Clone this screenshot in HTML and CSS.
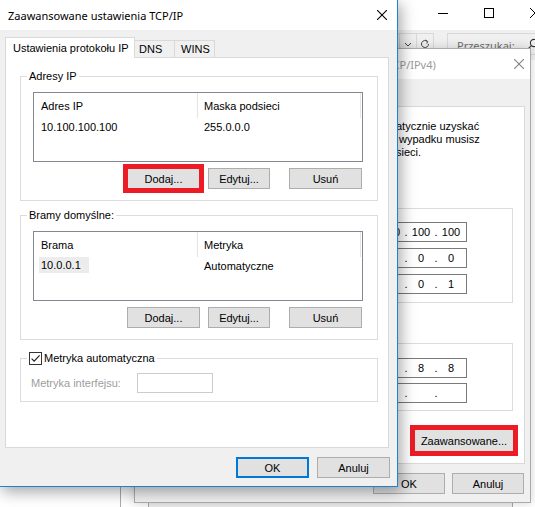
FILE: index.html
```html
<!DOCTYPE html>
<html lang="pl">
<head>
<meta charset="utf-8">
<title>Zaawansowane ustawienia TCP/IP</title>
<link rel="stylesheet" href="styles.css">
</head>
<body>
<div class="desktop">

  <div class="win explorer">
    <div class="ex-title">
      <span class="cap"><svg class="cap-ico" viewBox="0 0 10 10"><line x1="0" y1="5.5" x2="10" y2="5.5"/></svg></span>
      <span class="cap"><svg class="cap-ico" viewBox="0 0 10 10"><rect x="0.5" y="0.5" width="9" height="9"/></svg></span>
      <span class="cap"><svg class="cap-ico" viewBox="0 0 10 10"><line x1="0" y1="0" x2="10" y2="10"/><line x1="10" y1="0" x2="0" y2="10"/></svg></span>
    </div>
    <div class="ex-bar">
      <div class="ex-address">
        <span class="ex-seg"><svg class="ex-ico" viewBox="0 0 10 10"><polyline points="2,4 5,7 8,4"/></svg></span>
        <span class="ex-seg"><svg class="ex-ico" viewBox="0 0 10 10"><path d="M8.5 5a3.5 3.5 0 1 1 -1.2 -2.6"/><polyline points="5.5,1 7.6,2.4 6.8,4.6"/></svg></span>
      </div>
      <div class="ex-search">
        <span class="ex-search-text">Przeszukaj: Połączenia sieciowe</span>
        <svg class="ex-mag" viewBox="0 0 12 12"><circle cx="7" cy="5" r="3.6"/><line x1="4.4" y1="7.6" x2="0.8" y2="11.2"/></svg>
      </div>
    </div>
    <div class="ex-content"></div>
  </div>

  <div class="win ethprops"></div>

  <div class="win props">
    <div class="props-title">
      <span class="props-title-text">Właściwości: Protokół internetowy w wersji 4 (TCP/IPv4)</span>
      <svg class="close-ico close-ico-dim" viewBox="0 0 10 10"><line x1="0" y1="0" x2="10" y2="10"/><line x1="10" y1="0" x2="0" y2="10"/></svg>
    </div>
    <div class="props-body">
      <div class="props-tabs"><div class="props-tab"></div></div>
      <div class="panel props-panel">
        <p class="props-intro">atycznie uzyskać<br>&nbsp;wypadku musisz<br>sieci.</p>
        <div class="pgroup pgroup-ip">
          <div class="ipbox"><span class="oct">10</span><span class="dot">.</span><span class="oct">100</span><span class="dot">.</span><span class="oct">100</span><span class="dot">.</span><span class="oct">100</span></div>
          <div class="ipbox"><span class="oct">255</span><span class="dot">.</span><span class="oct">0</span><span class="dot">.</span><span class="oct">0</span><span class="dot">.</span><span class="oct">0</span></div>
          <div class="ipbox"><span class="oct">10</span><span class="dot">.</span><span class="oct">0</span><span class="dot">.</span><span class="oct">0</span><span class="dot">.</span><span class="oct">1</span></div>
        </div>
        <div class="pgroup pgroup-dns">
          <div class="ipbox"><span class="oct">8</span><span class="dot">.</span><span class="oct">8</span><span class="dot">.</span><span class="oct">8</span><span class="dot">.</span><span class="oct">8</span></div>
          <div class="ipbox"><span class="oct"></span><span class="dot">.</span><span class="oct"></span><span class="dot">.</span><span class="oct"></span><span class="dot">.</span><span class="oct"></span></div>
        </div>
        <button class="btn btn-advanced marked">Zaawansowane...</button>
      </div>
      <div class="props-buttons">
        <button class="btn btn-props">OK</button>
        <button class="btn btn-props">Anuluj</button>
      </div>
    </div>
  </div>

  <div class="win adv">
    <div class="adv-title">
      <span>Zaawansowane ustawienia TCP/IP</span>
      <svg class="close-ico" viewBox="0 0 10 10"><line x1="0" y1="0" x2="10" y2="10"/><line x1="10" y1="0" x2="0" y2="10"/></svg>
    </div>
    <div class="adv-body">
      <div class="tabs">
        <div class="tab tab-active">Ustawienia protokołu IP</div>
        <div class="tab tab-dns">DNS</div>
        <div class="tab tab-wins">WINS</div>
      </div>
      <div class="panel adv-panel">

        <div class="group">
          <div class="group-title">Adresy IP</div>
          <div class="listview">
            <div class="lv-head"><div class="lv-c1">Adres IP</div><div class="lv-c2">Maska podsieci</div></div>
            <div class="lv-row"><div class="lv-c1">10.100.100.100</div><div class="lv-c2">255.0.0.0</div></div>
          </div>
          <div class="btn-row">
            <button class="btn btn-add marked">Dodaj...</button>
            <button class="btn btn-edit">Edytuj...</button>
            <button class="btn btn-del">Usuń</button>
          </div>
        </div>

        <div class="group group-gw">
          <div class="group-title">Bramy domyślne:</div>
          <div class="listview">
            <div class="lv-head"><div class="lv-c1">Brama</div><div class="lv-c2">Metryka</div></div>
            <div class="lv-row"><div class="lv-c1 lv-c1-sel"><span class="lv-sel">10.0.0.1</span></div><div class="lv-c2">Automatyczne</div></div>
          </div>
          <div class="btn-row">
            <button class="btn btn-add">Dodaj...</button>
            <button class="btn btn-edit">Edytuj...</button>
            <button class="btn btn-del">Usuń</button>
          </div>
        </div>

        <div class="group group-metric">
          <div class="group-title">
            <span class="check"><svg viewBox="0 0 11 11"><polyline points="1.6,5.6 4.2,8.2 9.6,2.4"/></svg></span>
            <span class="check-label">Metryka automatyczna</span>
          </div>
          <div class="metric-row">
            <span class="metric-label">Metryka interfejsu:</span>
            <span class="metric-input"></span>
          </div>
        </div>

      </div>
      <div class="dlg-buttons">
        <button class="btn btn-default">OK</button>
        <button class="btn">Anuluj</button>
      </div>
    </div>
  </div>

</div>
</body>
</html>
```

FILE: styles.css
```css
* { box-sizing: border-box; }

html, body {
  margin: 0;
  padding: 0;
}

body {
  width: 535px;
  height: 507px;
  overflow: hidden;
  background: #ffffff;
  font-family: "Tahoma", "Liberation Sans", sans-serif;
  font-size: 11px;
  color: #000000;
}

.desktop {
  position: relative;
  width: 535px;
  height: 507px;
  overflow: hidden;
  background: #ffffff;
}

.win {
  position: absolute;
}

/* ---------- background explorer window ---------- */
.explorer {
  left: 120px;
  top: -1px;
  width: 439px;
  height: 520px;
  border: 1px solid #aaaaaa;
  background: #ffffff;
  z-index: 1;
}

.ex-title {
  height: 30px;
  display: flex;
  justify-content: flex-end;
}

.cap {
  width: 46px;
  height: 25px;
  display: flex;
  align-items: center;
  justify-content: center;
}

.cap-ico {
  width: 10px;
  height: 10px;
  fill: none;
  stroke: #000000;
  stroke-width: 1;
}

.ex-bar {
  height: 30px;
  background: #f0f0f0;
  display: flex;
  padding-top: 3px;
}

.ex-address {
  margin-left: 179px;
  width: 134px;
  height: 22px;
  border: 1px solid #d9d9d9;
  display: flex;
  justify-content: flex-end;
}

.ex-seg {
  width: 17px;
  border-left: 1px solid #d9d9d9;
  display: flex;
  align-items: center;
  justify-content: center;
}

.ex-ico {
  width: 10px;
  height: 10px;
  fill: none;
  stroke: #444444;
  stroke-width: 1;
}

.ex-search {
  margin-left: 13px;
  width: 102px;
  height: 22px;
  border: 1px solid #d9d9d9;
  display: flex;
  align-items: center;
  padding-left: 9px;
}

.ex-search-text {
  width: 70px;
  padding-top: 2px;
  overflow: hidden;
  white-space: nowrap;
  text-overflow: ellipsis;
  font-family: "Segoe UI", "Noto Sans", sans-serif;
  font-size: 11px;
  color: #6d6d6d;
}

.ex-mag {
  width: 12px;
  height: 12px;
  flex: none;
  fill: none;
  stroke: #333333;
  stroke-width: 1.1;
}

.ex-content {
  height: 460px;
  background: #ffffff;
}

/* ---------- dialog hidden behind the properties dialog ---------- */
.ethprops {
  left: 148px;
  top: 120px;
  width: 365px;
  height: 420px;
  border: 1px solid #aaaaaa;
  background: #f0f0f0;
  z-index: 1;
}

/* ---------- generic controls ---------- */
.close-ico {
  width: 10px;
  height: 10px;
  flex: none;
  stroke: #000000;
  stroke-width: 1.1;
}

.close-ico-dim {
  stroke: #808080;
}

.btn {
  height: 21px;
  padding: 0;
  border: 1px solid #adadad;
  background: #e1e1e1;
  font: inherit;
  color: #000000;
  display: flex;
  align-items: center;
  justify-content: center;
}

.marked {
  outline: 5px solid #ed1c24;
  outline-offset: -1px;
}

.panel {
  background: #ffffff;
  border: 1px solid #d9d9d9;
}

/* ---------- properties dialog (behind) ---------- */
.props {
  left: 134px;
  top: 48px;
  width: 397px;
  height: 455px;
  border: 1px solid #aaaaaa;
  background: #f0f0f0;
  z-index: 2;
  box-shadow: 0 0 10px rgba(0, 0, 0, 0.18);
}

.props-title {
  height: 30px;
  background: #ffffff;
  display: flex;
  align-items: center;
  justify-content: space-between;
  padding: 0 6px 0 16px;
  font-family: "Segoe UI", "Noto Sans", sans-serif;
  font-size: 11px;
  color: #9a9a9a;
}

.props-title-text {
  white-space: nowrap;
}

.props-body {
  padding: 6px 5px 0 5px;
}

.props-tabs {
  height: 21px;
  display: flex;
  align-items: flex-end;
}

.props-tab {
  width: 60px;
  height: 21px;
  margin-bottom: -1px;
  background: #ffffff;
  border: 1px solid #d9d9d9;
  border-bottom: none;
}

.props-panel {
  height: 358px;
  padding: 13px 10px 0 9px;
}

.props-intro {
  margin: 0;
  padding-left: 246px;
  line-height: 13px;
  white-space: nowrap;
}

.pgroup {
  margin-right: 1px;
  margin-left: 0;
  border: 1px solid #dcdcdc;
  display: flex;
  flex-direction: column;
  align-items: flex-end;
}

.pgroup-ip {
  margin-top: 49px;
  padding: 13px 45px 8px 0;
  gap: 6px;
}

.pgroup-dns {
  margin-top: 40px;
  padding: 14px 45px 7px 0;
  gap: 5px;
}

.ipbox {
  width: 123px;
  height: 20px;
  border: 1px solid #7a7a7a;
  background: #ffffff;
  display: flex;
  align-items: center;
  padding: 0 3px 0 4px;
}

.oct {
  width: 24px;
  text-align: center;
}

.dot {
  width: 6px;
  text-align: center;
}

.btn-advanced {
  width: 100px;
  height: 23px;
  margin: 18px 0 0 auto;
}

.props-buttons {
  margin-top: 9px;
  display: flex;
  justify-content: flex-end;
  gap: 7px;
  padding-right: 1px;
}

.btn-props {
  width: 72px;
}

/* ---------- advanced TCP/IP dialog (front) ---------- */
.adv {
  left: -1px;
  top: -1px;
  width: 399px;
  height: 488px;
  border: 1px solid #1883d7;
  background: #f0f0f0;
  z-index: 3;
  box-shadow: 3px 5px 14px rgba(0, 0, 0, 0.35);
}

.adv-title {
  height: 30px;
  background: #ffffff;
  display: flex;
  align-items: center;
  justify-content: space-between;
  padding: 0 10px 0 8px;
  font-family: "Segoe UI", "Noto Sans", sans-serif;
  font-size: 11px;
}

.adv-body {
  padding: 7px 8px 0 5px;
}

.tabs {
  height: 20px;
  display: flex;
  align-items: flex-end;
}

.tab {
  height: 17px;
  border-top: 1px solid #d9d9d9;
  border-right: 1px solid #d9d9d9;
  background: #f0f0f0;
  display: flex;
  align-items: center;
  white-space: nowrap;
}

.tab-active {
  position: relative;
  z-index: 1;
  width: 130px;
  height: 21px;
  margin-bottom: -1px;
  border-left: 1px solid #d9d9d9;
  background: #ffffff;
  padding-left: 7px;
}

.tab-dns {
  width: 40px;
  padding-left: 4px;
}

.tab-wins {
  width: 40px;
  padding-left: 6px;
}

.adv-panel {
  height: 391px;
}

.group {
  margin: 18px 10px 0 14px;
  border: 1px solid #dcdcdc;
  padding: 0 14px 11px 12px;
}

.group-gw {
  margin-top: 14px;
}

.group-metric {
  margin-top: 18px;
  padding-bottom: 8px;
}

.group-title {
  display: flex;
  align-items: center;
  width: max-content;
  height: 15px;
  line-height: 15px;
  margin: -8px 0 0 -6px;
  padding: 0 2px;
  background: #ffffff;
}

.listview {
  margin-top: 8px;
  height: 70px;
  border: 1px solid #828790;
  background: #ffffff;
}

.lv-head {
  display: flex;
  height: 25px;
}

.lv-row {
  display: flex;
  height: 18px;
}

.lv-c1,
.lv-c2 {
  display: flex;
  align-items: center;
  white-space: nowrap;
}

.lv-c1 {
  width: 164px;
  padding-left: 7px;
}

.lv-c2 {
  width: 163px;
  padding-left: 6px;
}

.lv-head .lv-c1,
.lv-head .lv-c2 {
  border-right: 1px solid #e5e5e5;
}

.lv-c1-sel {
  padding-left: 5px;
  align-items: flex-start;
}

.lv-sel {
  height: 16px;
  line-height: 16px;
  padding: 0 8px 0 2px;
  background: #ececec;
}

.btn-row {
  display: flex;
  margin-top: 6px;
  padding-left: 94px;
}

.btn-add {
  width: 73px;
  margin-right: 8px;
}

.btn-edit {
  width: 62px;
  margin-right: 19px;
}

.btn-del {
  width: 73px;
}

.check {
  width: 13px;
  height: 13px;
  border: 1px solid #333333;
  background: #ffffff;
  display: flex;
  align-items: center;
  justify-content: center;
}

.check svg {
  width: 11px;
  height: 11px;
  fill: none;
  stroke: #222222;
  stroke-width: 1.2;
}

.check-label {
  margin-left: 2px;
}

.metric-row {
  display: flex;
  align-items: center;
  margin: 7px 0 0 -2px;
}

.metric-label {
  width: 106px;
  color: #9d9d9d;
}

.metric-input {
  width: 76px;
  height: 20px;
  border: 1px solid #cccccc;
  background: #ffffff;
}

.dlg-buttons {
  margin-top: 9px;
  margin-right: -1px;
  display: flex;
  justify-content: flex-end;
  gap: 8px;
}

.dlg-buttons .btn {
  width: 73px;
}

.btn-default {
  border-color: #0078d7;
  box-shadow: inset 0 0 0 1px #0078d7;
}
```
